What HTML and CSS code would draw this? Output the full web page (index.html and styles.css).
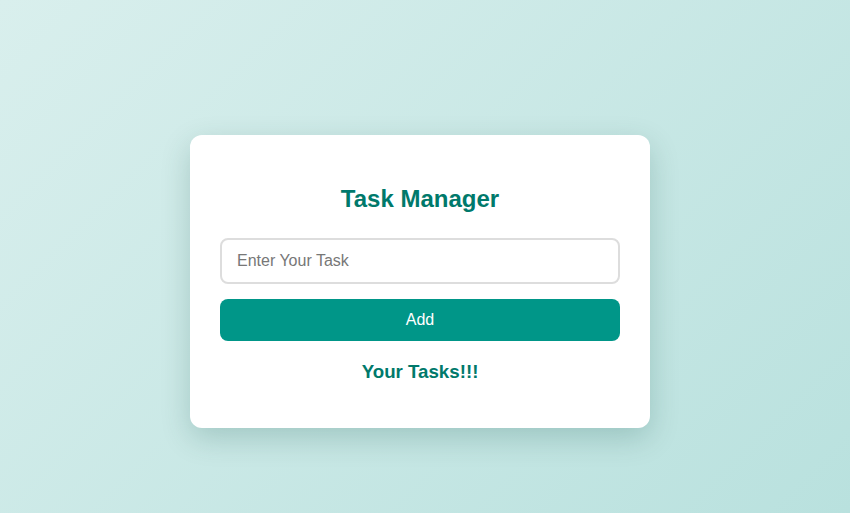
FILE: index.html
```html
<!DOCTYPE html>
<html>
<head>
<meta charset="utf-8">
<link rel="stylesheet" href="styles.css">
</head>
<body>
<div class="card">
  <h2 class="title">Task Manager</h2>
  <input class="task-input" type="text" placeholder="Enter Your Task">
  <button class="add-btn">Add</button>
  <h3 class="subtitle">Your Tasks!!!</h3>
</div>
</body>
</html>
```
FILE: styles.css
```css
html, body {
  margin: 0;
  padding: 0;
  height: 100%;
}
body {
  font-family: "Liberation Sans", Arial, sans-serif;
  background: linear-gradient(135deg, #d9efed 0%, #b9e1de 100%);
  overflow: hidden;
}
.card {
  box-sizing: border-box;
  width: 460px;
  margin: 135px 0 0 190px;
  padding: 30px;
  height: 293px;
  background: #fff;
  border-radius: 12px;
  box-shadow: 0 10px 30px rgba(0, 70, 60, 0.2);
  display: flex;
  flex-direction: column;
  align-items: stretch;
}
.title {
  margin: 20px 0 0;
  text-align: center;
  font-size: 24px;
  line-height: 28px;
  font-weight: bold;
  color: #00796b;
}
.task-input {
  box-sizing: border-box;
  margin-top: 25px;
  height: 46px;
  width: 100%;
  padding: 0 15px;
  border: 2px solid #ddd;
  border-radius: 8px;
  font-family: "Liberation Sans", Arial, sans-serif;
  font-size: 16px;
  color: #333;
  outline: none;
}
.task-input::placeholder {
  color: #777;
}
.add-btn {
  box-sizing: border-box;
  margin-top: 15px;
  height: 42px;
  width: 100%;
  border: none;
  border-radius: 8px;
  background: #009688;
  color: #fff;
  font-family: "Liberation Sans", Arial, sans-serif;
  font-size: 16px;
}
.subtitle {
  margin: 20px 0 0;
  text-align: center;
  font-size: 18.72px;
  line-height: 22px;
  font-weight: bold;
  color: #00796b;
}
```
